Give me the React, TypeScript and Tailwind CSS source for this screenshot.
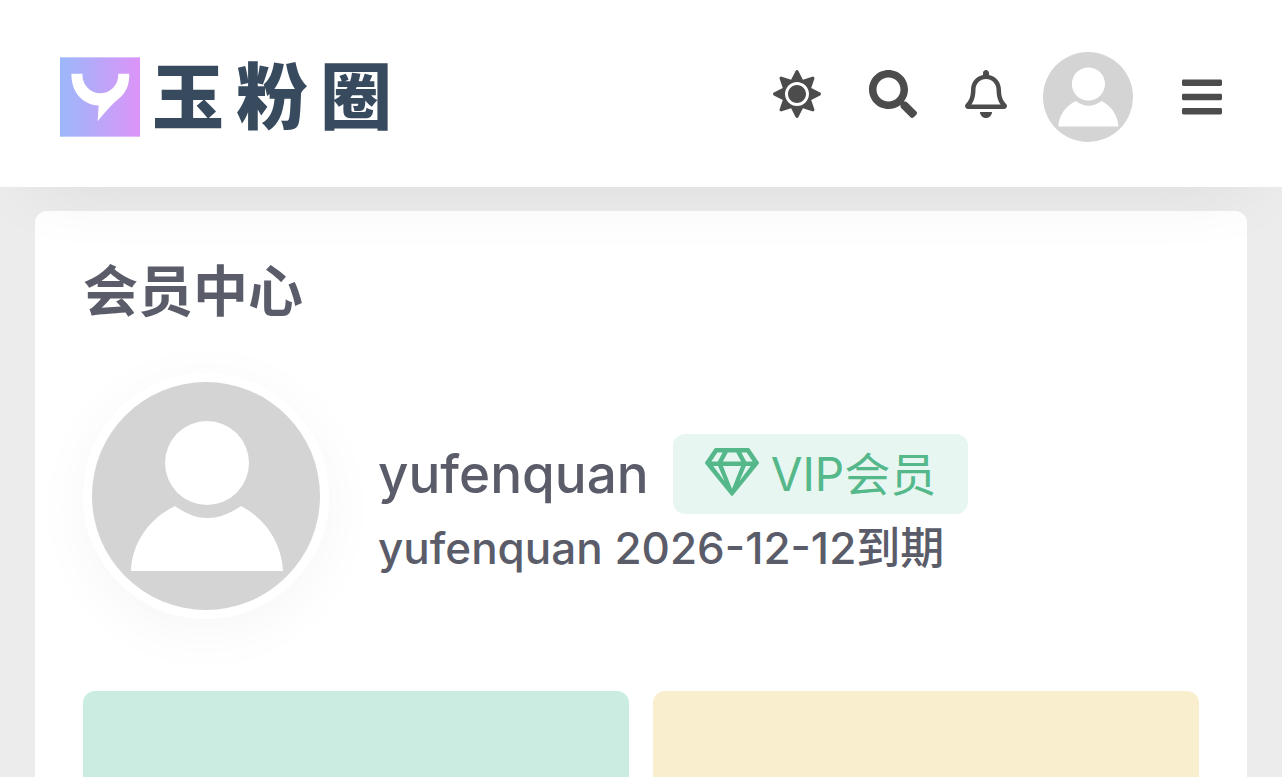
import React from 'react';
import { FaSun, FaSearch, FaRegBell, FaBars, FaRegGem } from 'react-icons/fa';

interface AvatarProps {
  className: string;
}

const Avatar: React.FC<AvatarProps> = ({ className }) => (
  <svg viewBox="0 0 228 228" className={className} aria-hidden="true">
    <circle cx="114" cy="114" r="114" fill="#d4d4d4" />
    <circle cx="115" cy="81" r="42" fill="#fff" />
    <path d="M39 189C40 162 56 137 83 124Q115 148 149 124C174 137 190 162 191 189Z" fill="#fff" />
  </svg>
);

const Logo: React.FC = () => (
  <a href="#" className="flex items-center gap-3 text-[#384a5e]">
    <svg viewBox="0 0 238 236" className="w-20 h-20" aria-hidden="true">
      <defs>
        <linearGradient id="logo-bg" x1="0" y1="0" x2="1" y2="0">
          <stop offset="0" stopColor="#9bb8fa" />
          <stop offset="1" stopColor="#dc94f8" />
        </linearGradient>
      </defs>
      <rect width="238" height="236" fill="url(#logo-bg)" />
      <path
        d="M34 49H67V54A53 53 0 0 0 173 54V49H206C207 80 198 103 178 120C155 139 133 163 112 190L115 143C68 142 33 104 34 49Z"
        fill="#fff"
      />
    </svg>
    <span className="flex gap-3 text-[72px] leading-20 font-black">
      <span>玉</span>
      <span>粉</span>
      <span>圈</span>
    </span>
  </a>
);

const Header: React.FC = () => (
  <header className="relative z-10 flex items-center justify-between bg-white px-15 pt-13 pb-[45px] text-[#4c4c4c] shadow-[0_30px_75px_-30px_rgba(0,0,0,0.07)]">
    <Logo />
    <div className="flex items-center">
      <div className="flex items-center gap-12 pb-1.5 text-5xl">
        <button type="button" aria-label="切换主题"><FaSun /></button>
        <button type="button" aria-label="搜索"><FaSearch /></button>
        <button type="button" aria-label="通知"><FaRegBell className="w-[42px]" /></button>
      </div>
      <a href="#" aria-label="会员中心" className="ml-9">
        <Avatar className="w-[90px] h-[90px]" />
      </a>
      <button type="button" aria-label="菜单" className="ml-[49px]">
        <FaBars className="w-10 h-[46px]" />
      </button>
    </div>
  </header>
);

const App: React.FC = () => {
  return (
    <div className="min-h-screen flex flex-col bg-[#ececec] text-[#5a5c69] font-['Inter','Noto_Sans_CJK_SC',sans-serif]">
      <Header />

      <main className="flex-1 flex flex-col px-[35px] pt-6">
        <section className="flex-1 flex flex-col rounded-t-xl bg-white px-12 pt-12">
          <h1 className="text-[55px] leading-16 font-bold">会员中心</h1>

          <div className="flex items-center mt-[50px]">
            <div className="shrink-0 rounded-full border-[9px] border-white shadow-[0_12px_60px_rgba(0,0,0,0.04)]">
              <Avatar className="w-[228px] h-[228px]" />
            </div>
            <div className="ml-[49px] pt-6">
              <div className="flex items-center gap-6">
                <span className="text-[53px] leading-16 font-medium">yufenquan</span>
                <span className="flex items-center gap-3 h-20 rounded-xl bg-[#e7f6f1] px-8 text-[46px] text-[#54b88a]">
                  <FaRegGem className="w-[54px] h-12 mb-1" />
                  VIP会员
                </span>
              </div>
              <p className="text-[44px] leading-[68px] font-medium">yufenquan 2026-12-12到期</p>
            </div>
          </div>

          <div className="flex-1 grid grid-cols-2 gap-6 mt-18">
            <div className="rounded-t-xl bg-[#cbece0]"></div>
            <div className="rounded-t-xl bg-[#f9eecd]"></div>
          </div>
        </section>
      </main>
    </div>
  );
};

export default App;
